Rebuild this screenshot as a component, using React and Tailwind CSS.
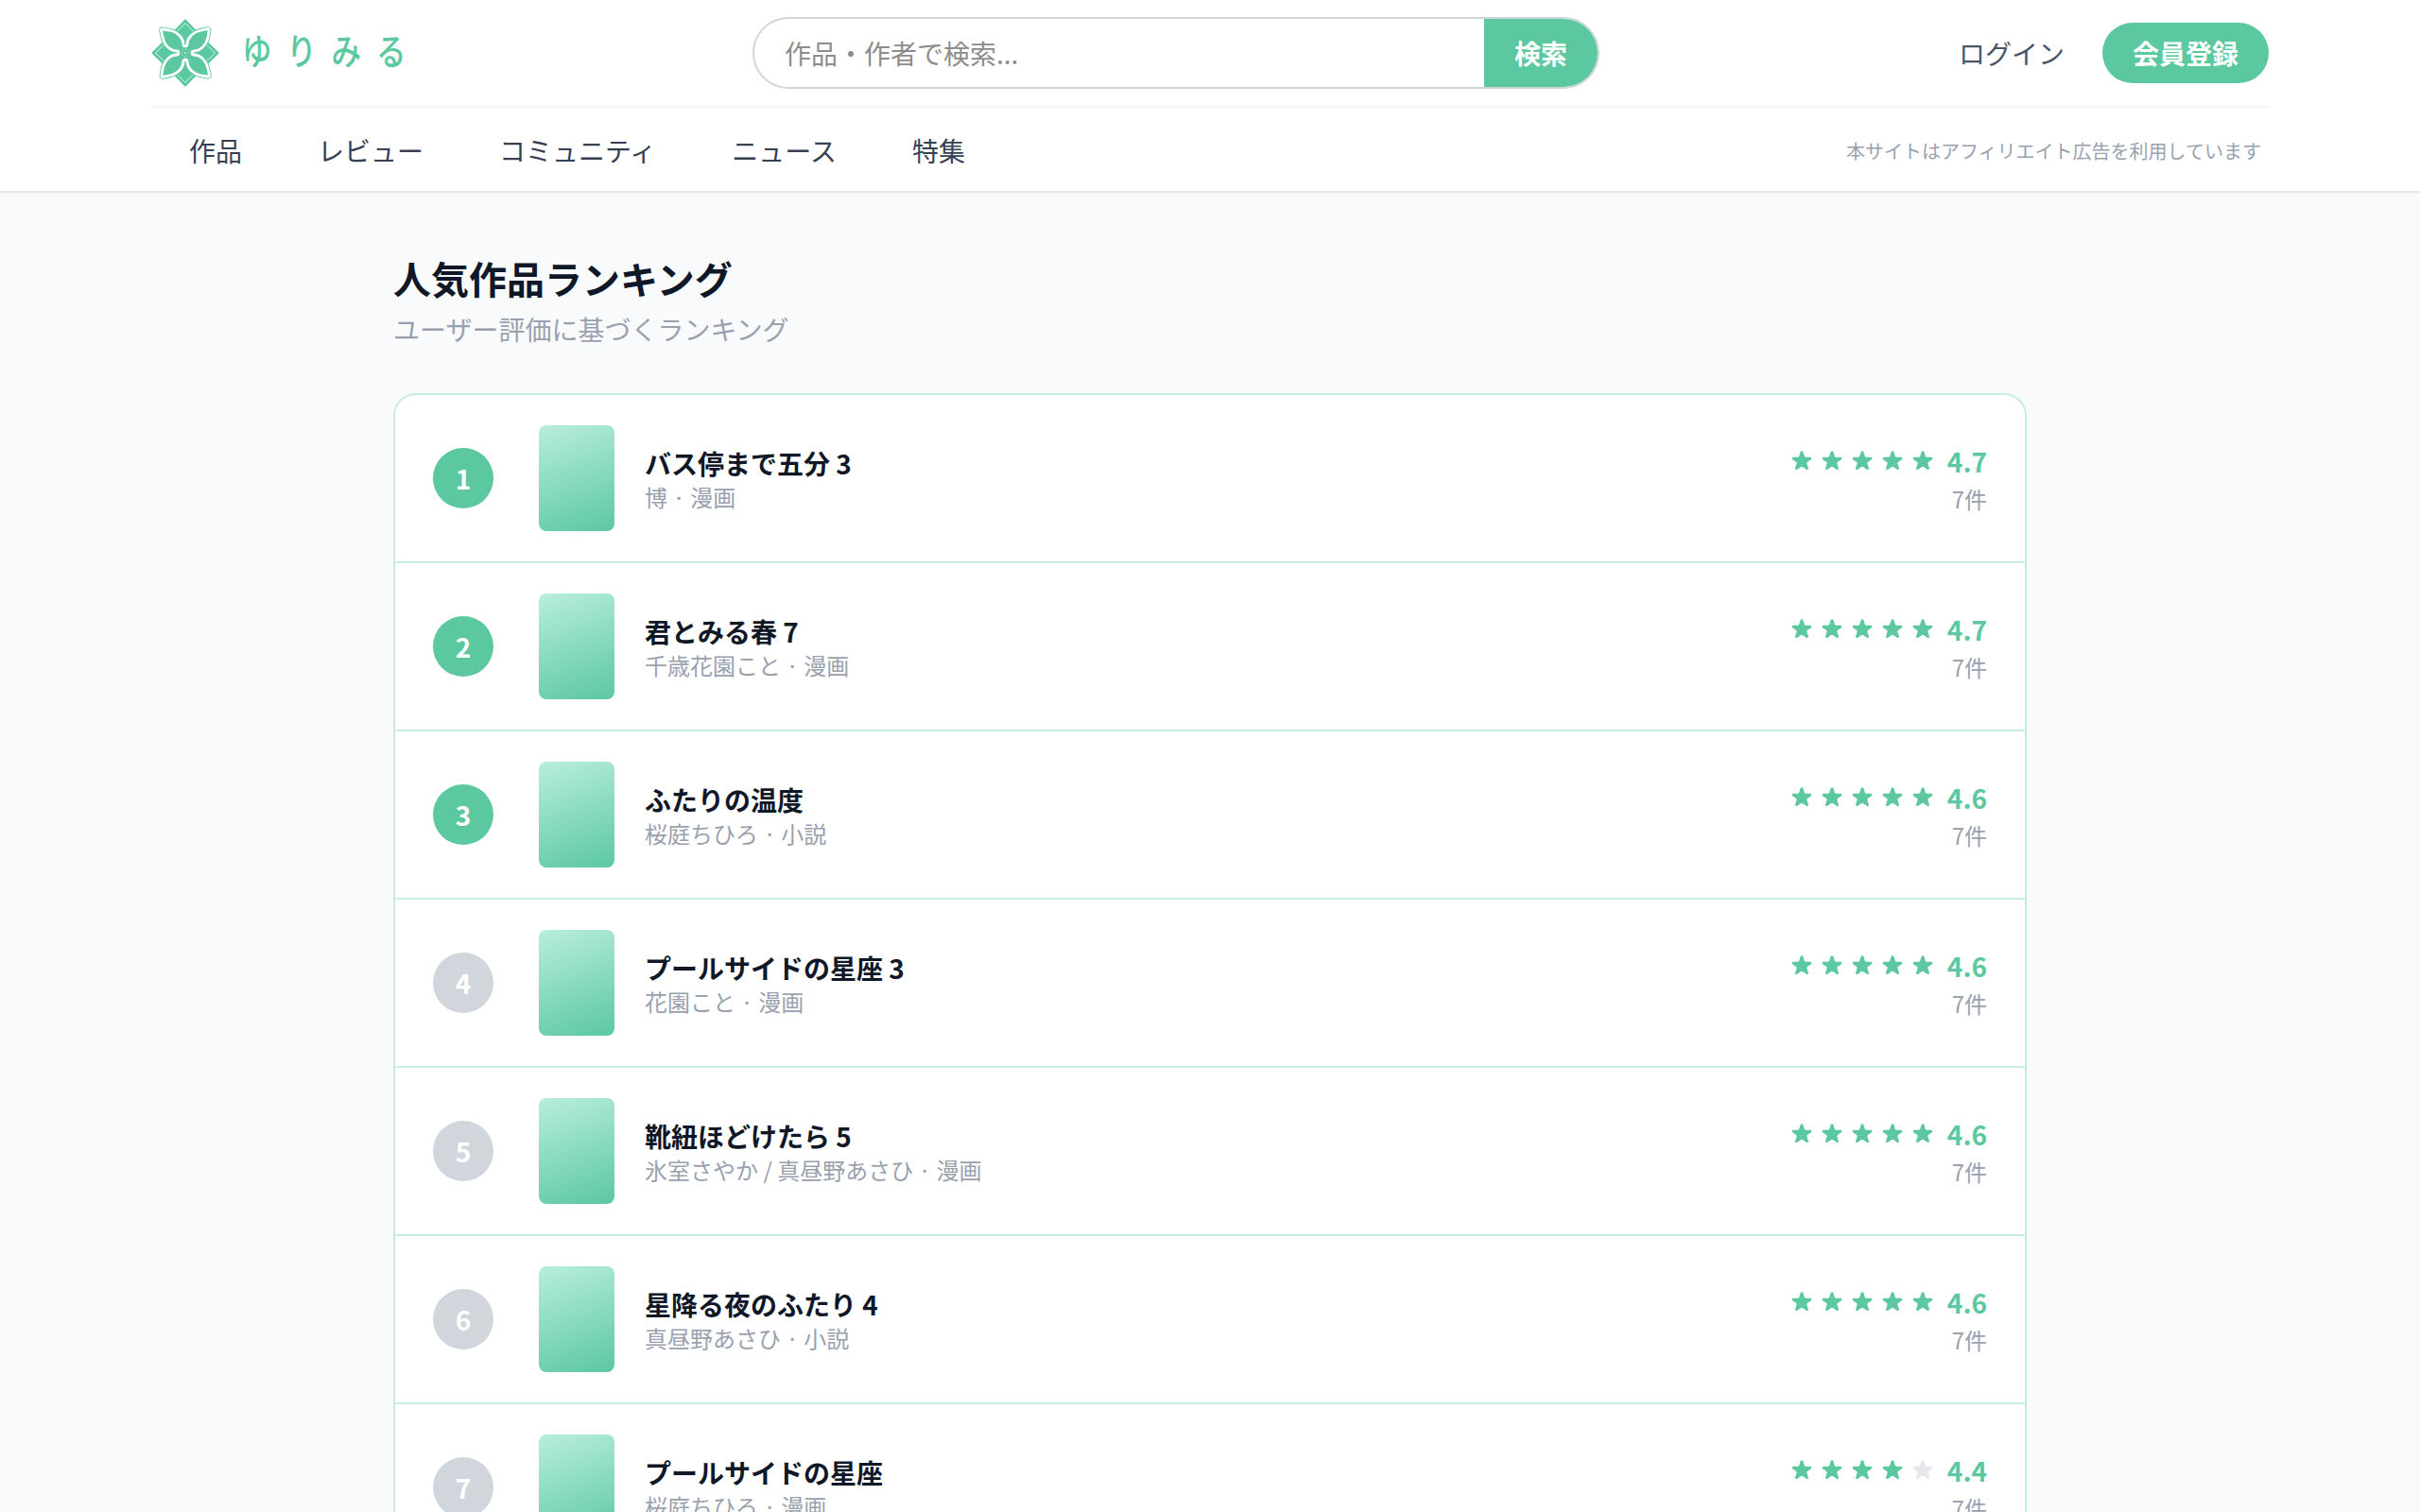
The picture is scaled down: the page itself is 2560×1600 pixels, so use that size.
import { useState } from "react";

const navItems = ["作品", "レビュー", "コミュニティ", "ニュース", "特集"];

const works = [
  { title: "バス停まで五分 3", meta: "博 · 漫画", score: "4.7", stars: 5, count: 7 },
  { title: "君とみる春 7", meta: "千歳花園こと · 漫画", score: "4.7", stars: 5, count: 7 },
  { title: "ふたりの温度", meta: "桜庭ちひろ · 小説", score: "4.6", stars: 5, count: 7 },
  { title: "プールサイドの星座 3", meta: "花園こと · 漫画", score: "4.6", stars: 5, count: 7 },
  { title: "靴紐ほどけたら 5", meta: "氷室さやか / 真昼野あさひ · 漫画", score: "4.6", stars: 5, count: 7 },
  { title: "星降る夜のふたり 4", meta: "真昼野あさひ · 小説", score: "4.6", stars: 5, count: 7 },
  { title: "プールサイドの星座", meta: "桜庭ちひろ · 漫画", score: "4.4", stars: 4, count: 7 },
];

const turns = [0, 90, 180, 270];
const petal = "M0 -7 Q2 -7 2 -9 C2 -15 7 -22 17 -24 Q21 -25 24 -25.5 Q25.5 -25.5 25 -23.5 L24 -17 C22 -7 15 -2 9 -2 Q7 -2 7 0";

function LogoMark() {
  return (
    <svg className="w-[72px] h-[72px] shrink-0" viewBox="-36 -36 72 72">
      {/* outer diamond petals */}
      {turns.map((r) => (
        <g key={r} transform={`rotate(${r})`}>
          <path d="M0 -34.5 L17 -17 L0 0 L-17 -17 Z" fill="#5bc8a0" stroke="#5bc8a0" strokeWidth="2" strokeLinejoin="round" />
          <path d="M-14 -17 L0 -31.5 L14 -17" fill="none" stroke="#d9f4e9" strokeWidth="1" />
        </g>
      ))}
      {/* flower: green rim, white outline, green body */}
      {turns.map((r) => (
        <path key={r} transform={`rotate(${r})`} d={petal} fill="#5bc8a0" stroke="#5bc8a0" strokeWidth="4.6" strokeLinejoin="round" />
      ))}
      {turns.map((r) => (
        <path key={r} transform={`rotate(${r})`} d={petal} fill="none" stroke="#fff" strokeWidth="2.8" strokeLinejoin="round" />
      ))}
      <circle r="5.6" fill="#5bc8a0" />
      <circle r="4" fill="none" stroke="#c6eeda" strokeWidth="0.9" strokeDasharray="1.2 1.9" />
      <circle r="1" fill="#c6eeda" />
    </svg>
  );
}

function Star({ filled }) {
  return (
    <svg className={filled ? "w-7 h-7 text-[#5bc8a0]" : "w-7 h-7 text-gray-200"} viewBox="0 0 20 20" fill="currentColor">
      <path d="M9.049 2.927c.3-.921 1.603-.921 1.902 0l1.07 3.292a1 1 0 00.95.69h3.462c.969 0 1.371 1.24.588 1.81l-2.8 2.034a1 1 0 00-.364 1.118l1.07 3.292c.3.921-.755 1.688-1.54 1.118l-2.8-2.034a1 1 0 00-1.175 0l-2.8 2.034c-.784.57-1.838-.197-1.539-1.118l1.07-3.292a1 1 0 00-.364-1.118L2.98 8.72c-.783-.57-.38-1.81.588-1.81h3.461a1 1 0 00.951-.69l1.07-3.292z" />
    </svg>
  );
}

function Header() {
  const [query, setQuery] = useState("");

  return (
    <header className="bg-white border-b-2 border-gray-200">
      <div className="w-[2240px] mx-auto">
        <div className="h-[114px] flex items-center justify-between border-b-2 border-gray-100">
          <a href="#" className="w-[636px] flex items-center gap-6">
            <LogoMark />
            <span className="-mt-2 origin-left scale-x-[.83] text-[38px] leading-none font-medium tracking-[19px] text-[#5bc8a0]">
              ゆりみる
            </span>
          </a>

          <form
            onSubmit={(e) => e.preventDefault()}
            className="w-[896px] h-[76px] flex border-2 border-gray-300 rounded-full overflow-hidden"
          >
            <input
              type="text"
              value={query}
              onChange={(e) => setQuery(e.target.value)}
              placeholder="作品・作者で検索..."
              className="flex-1 min-w-0 px-8 text-[28px] outline-none placeholder:text-[#8c8c8c]"
            />
            <button type="submit" className="w-[120px] bg-[#5bc8a0] text-white text-[28px] font-bold">
              検索
            </button>
          </form>

          <div className="w-[708px] flex items-center justify-end gap-10">
            <a href="#" className="text-[28px] text-[#4a5568]">ログイン</a>
            <a href="#" className="h-16 px-8 flex items-center rounded-full bg-[#5bc8a0] text-white text-[28px] font-bold">
              会員登録
            </a>
          </div>
        </div>

        <nav className="h-[88px] pt-0.5 flex items-center justify-between pl-10 pr-2">
          <div className="flex gap-20">
            {navItems.map((item) => (
              <a key={item} href="#" className="text-[28px] text-gray-700">{item}</a>
            ))}
          </div>
          <span className="pt-0.5 text-[20px] text-gray-400">本サイトはアフィリエイト広告を利用しています</span>
        </nav>
      </div>
    </header>
  );
}

function RankingRow({ rank, work }) {
  return (
    <li className="h-[178px] flex items-center px-10 border-b-2 border-[#c6eeda]">
      <div
        className={
          "w-16 h-16 shrink-0 rounded-full flex items-center justify-center text-white text-[28px] font-bold " +
          (rank <= 3 ? "bg-[#5bc8a0]" : "bg-gray-300")
        }
      >
        {rank}
      </div>
      <div className="w-20 h-28 ml-12 shrink-0 rounded-lg bg-[linear-gradient(160deg,#b8eedb,#5bc8a0)]" />
      <div className="flex-1 ml-8 pt-1">
        <p className="text-[28px] leading-[35px] font-bold text-gray-900">{work.title}</p>
        <p className="text-[24px] leading-[36px] text-gray-400">{work.meta}</p>
      </div>
      <div className="flex flex-col items-end pt-0.5">
        <div className="flex items-center gap-3">
          <div className="flex gap-1">
            {[1, 2, 3, 4, 5].map((n) => (
              <Star key={n} filled={n <= work.stars} />
            ))}
          </div>
          <span className="text-[28px] leading-[40px] font-bold text-[#5bc8a0]">{work.score}</span>
        </div>
        <span className="mt-0.5 text-[24px] leading-[36px] text-gray-400">{work.count}件</span>
      </div>
    </li>
  );
}

export default function App() {
  return (
    <div lang="ja" className="h-[1600px] overflow-hidden bg-[#f9fafc] font-['Noto_Sans_CJK_JP',sans-serif]">
      <Header />

      <main className="w-[1728px] mx-auto pt-[62px]">
        <h1 className="text-[40px] leading-[56px] font-bold text-gray-900">人気作品ランキング</h1>
        <p className="mt-1 text-[28px] leading-[44px] text-gray-400">ユーザー評価に基づくランキング</p>

        {/* Ranking list */}
        <ol className="mt-[46px] bg-white border-2 border-[#c6eeda] rounded-3xl overflow-hidden">
          {works.map((work, i) => (
            <RankingRow key={i} rank={i + 1} work={work} />
          ))}
        </ol>
      </main>
    </div>
  );
}
